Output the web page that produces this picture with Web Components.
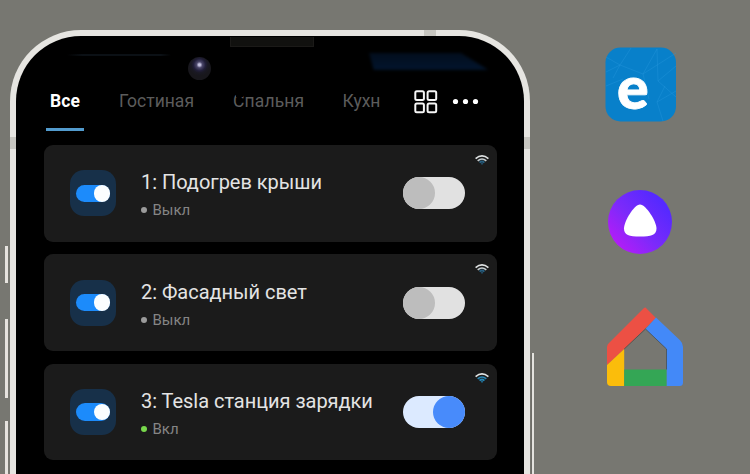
<!DOCTYPE html>
<html lang="ru"><head><meta charset="utf-8"><title>Умный дом</title>
<style>
html,body{margin:0;width:750px;height:474px;overflow:hidden;background:#777771;font-family:Roboto,"Liberation Sans",sans-serif}
</style></head><body>
<smart-home></smart-home>
<script>
const define=(name,html,setup)=>customElements.define(name,class extends HTMLElement{
  connectedCallback(){
    if(this.shadowRoot)return;
    this.attachShadow({mode:'open'}).innerHTML=html;
    if(setup)setup(this);
  }
});

define('wifi-mark',`<style>:host{display:block;width:14px;height:10px}svg{display:block}
.b{stroke:#275f80}:host([linked]) .m{stroke:#2585b4}:host([linked]) .b{stroke:#2585b4}</style>
<svg width="14" height="10" viewBox="0 0 14 10" fill="none" stroke-width="1.6">
<path d="M.6 3.6Q7-1.8 13.4 3.6" stroke="#dfe2e2"/><path class="m" d="M2.7 5.9Q7 2.1 11.3 5.9" stroke="#c3cbce"/>
<path class="b" d="M4.6 7.6Q7 5.4 9.4 7.6" stroke-width="1.8"/><circle class="b" cx="7" cy="8.8" r=".5" stroke-width="1"/></svg>`);

define('power-toggle',`<style>:host{display:flex;width:62px;height:32px;border-radius:16px;background:#e1e1e1}
i{width:32px;height:32px;border-radius:50%;background:#bdbdbd}
:host([on]){background:#dceaff;justify-content:flex-end}:host([on]) i{background:#488bfb}</style><i></i>`);

define('device-badge',`<style>:host{display:grid;place-items:center;width:46px;height:46px;border-radius:14px;background:#173049}
span{display:flex;justify-content:flex-end;align-items:center;width:34.5px;height:17.5px;border-radius:9px;background:#1c8bfb}
i{width:16.5px;height:16.5px;border-radius:50%;background:#fbfeff}</style><span><i></i></span>`);

define('device-card',`<style>
:host{display:flex;position:relative;box-sizing:border-box;height:96.4px;border-radius:9px;background:#1b1b1b;padding:0 31.3px 0 26.3px;align-items:center}
.copy{flex:1;margin:2px 0 0 25.2px;color:#e4e4e4;white-space:nowrap}
.title{display:block;font-size:20px;line-height:28px;letter-spacing:-.03px}
.state{display:flex;align-items:center;gap:5.5px;font-size:15px;line-height:20px;margin-top:4px;color:#858585}
.state i{width:6px;height:6px;border-radius:50%;background:#9b9b9b}
:host([on]) .state i{background:#78d84c}
wifi-mark{position:absolute;right:7.5px;top:9.5px}
</style><device-badge></device-badge><div class="copy"><span class="title"><slot></slot></span><div class="state"><i></i><slot name="state"></slot></div></div><power-toggle></power-toggle><wifi-mark></wifi-mark>`,
el=>{if(el.hasAttribute('on')){el.shadowRoot.querySelector('power-toggle').setAttribute('on','');el.shadowRoot.querySelector('wifi-mark').setAttribute('linked','')}});

define('room-tabs',`<style>
:host{display:flex;height:50px;padding-left:6.4px;font-size:17.5px;line-height:41px;color:#5c5c5c;align-items:flex-start;white-space:nowrap}
span{position:relative}.all{color:#fff;font-weight:700;width:31px;margin-right:38.1px;letter-spacing:.15px}
.all::after{content:"";position:absolute;left:-3.8px;top:47px;width:38px;height:3px;background:#529bce}
.living{width:75px;margin-right:39px}.bed{width:71px;margin-right:38.5px;letter-spacing:.15px}
.bed::before{content:"";position:absolute;left:3px;top:13px;width:7px;height:3px;background:#000}
.kitchen{width:39px;margin-right:32.4px}svg{margin-top:9px}
</style><span class="all">Все</span><span class="living">Гостиная</span><span class="bed">Спальня</span><span class="kitchen">Кухн</span>
<svg width="66" height="24" viewBox="0 0 66 24"><g fill="none" stroke="#f6f6f6" stroke-width="2"><rect x="1.3" y="1.3" width="8.6" height="8.6" rx="1.5"/><rect x="13.6" y="1.3" width="8.6" height="8.6" rx="1.5"/><rect x="1.3" y="13.6" width="8.6" height="8.6" rx="1.5"/><rect x="13.6" y="13.6" width="8.6" height="8.6" rx="1.5"/></g><g fill="#fff"><circle cx="41.5" cy="11.5" r="2.6"/><circle cx="51.5" cy="11.5" r="2.6"/><circle cx="61.5" cy="11.5" r="2.6"/></g></svg>`);

define('phone-shell',`<style>
:host{display:block;position:relative;box-sizing:border-box;width:520px;height:520px;border:6.3px solid #e6e5e1;border-bottom:0;border-radius:71px 71px 0 0;background:#000}
.content{padding:45px 27.5px 0}
i{position:absolute}
.speaker{left:214px;top:1px;width:84px;height:10px;background:#11110f;border:1px solid #1b1a18;border-top:0;box-sizing:border-box}
.camera{left:171.5px;top:21px;width:23px;height:23px;border-radius:50%;background:radial-gradient(circle at 50% 34%,#c5c2df 0 1px,#4a4669 3px,#211e39 6px,#1a1924 8px,#18171c 11px)}
.glow{left:353px;top:17px;width:119px;height:17px;filter:blur(1.5px)}
.glow::before{content:"";display:block;height:100%;background:linear-gradient(#020d1c,#02152d);clip-path:polygon(0 0,77% 0,100% 100%,4% 100%)}
.line{left:51px;top:18px;width:104px;height:2px;background:linear-gradient(90deg,#000,#0b1015 15%,#0b1015 90%,#000)}
.button{width:2.6px;background:#e6e3df;left:-10.8px}.b1{top:210px;height:37px}.b2{top:283px;height:79px}.b3{top:385px;height:90px}
.side{left:515px;top:317px;width:2px;height:180px;background:#e4e3df;border-left:1px solid #6e6d68}
.band{width:6px;height:12px;background:#c7c6c0}.b4{left:-6px;top:101px}.b5{right:-6px;top:101px}.b6{left:408px;top:-6px;width:12px;height:6px}
</style><i class="speaker"></i><i class="line"></i><i class="glow"></i><i class="camera"></i><i class="button b1"></i><i class="button b2"></i><i class="button b3"></i><i class="side"></i><i class="band b4"></i><i class="band b5"></i><i class="band b6"></i><div class="content"><slot></slot></div>`);

define('service-logos',`<style>:host{display:flex;flex-direction:column;padding-top:47px;width:80px}svg{display:block;overflow:visible}.alice{margin:66.5px 0 0 3px}.home{margin:53px 0 0 2px}</style>
<svg width="72" height="76" viewBox="0 0 72 76"><rect x=".5" y=".5" width="70.5" height="74" rx="15" fill="#0880ca"/>
<g fill="none" stroke="#2697db" opacity=".4"><path d="M1 25 15 18 38 27 71 6M1 10 15 18 8 31M38 27 52 2 53 34 71 19M26 1 15 18M1 39 18 32M53 34 71 50M52 55 71 44M60 39 52 55 58 74M38 27 44 52"/></g>
<text x="27.8" y="62" text-anchor="middle" font-family="Lato" font-size="59" font-weight="900" fill="#fff" stroke="#fff" stroke-width=".8">e</text></svg>
<svg class="alice" width="64" height="64" viewBox="0 0 64 64"><defs><linearGradient id="g" x1=".12" y1=".88" x2=".85" y2=".2"><stop stop-color="#b51cf7"/><stop offset=".48" stop-color="#7b2afa"/><stop offset="1" stop-color="#5529ff"/></linearGradient></defs><circle cx="32" cy="32" r="32" fill="url(#g)"/><path d="M32 14.5C38 14.5 48.5 31.5 48.5 38.5C48.5 45 43 46.6 32 46.6S16 45 16 38.5C16 31.5 26 14.5 32 14.5Z" fill="#fff"/></svg>
<svg class="home" width="77" height="80" viewBox="0 0 77 80"><path d="M38.5.5 49 11 17.2 42 0 58V40Q0 37.5 2 36L36.5 1.5Q38 0 38.5.5Z" fill="#ec5044"/><path d="M49 10.5 73 33.2Q76 36 76 40V75.5Q76 79 72.5 79H59.5V42L38.5 22Z" fill="#4389f8"/><path d="M0 58 17.2 42V79H4Q0 79 0 75Z" fill="#fbbd0b"/><path d="M17.2 62.5H59.5V79H17.2Z" fill="#34a655"/><path d="M17.2 42 38.5 22 59.5 42V62.5" fill="none" stroke="#454744" stroke-width=".7"/></svg>`);

define('smart-home',`<style>
:host{display:flex;height:474px;overflow:hidden;background:#777771}
phone-shell{flex:none;margin:29.7px 0 0 10px}service-logos{margin-left:75px}
.cards{display:flex;flex-direction:column;gap:12.9px;padding-top:14.5px}
</style><phone-shell><room-tabs></room-tabs><div class="cards">
<device-card>1: Подогрев крыши<span slot="state">Выкл</span></device-card>
<device-card>2: Фасадный свет<span slot="state">Выкл</span></device-card>
<device-card on>3: Tesla станция зарядки<span slot="state">Вкл</span></device-card></div></phone-shell><service-logos></service-logos>`);
</script></body></html>
